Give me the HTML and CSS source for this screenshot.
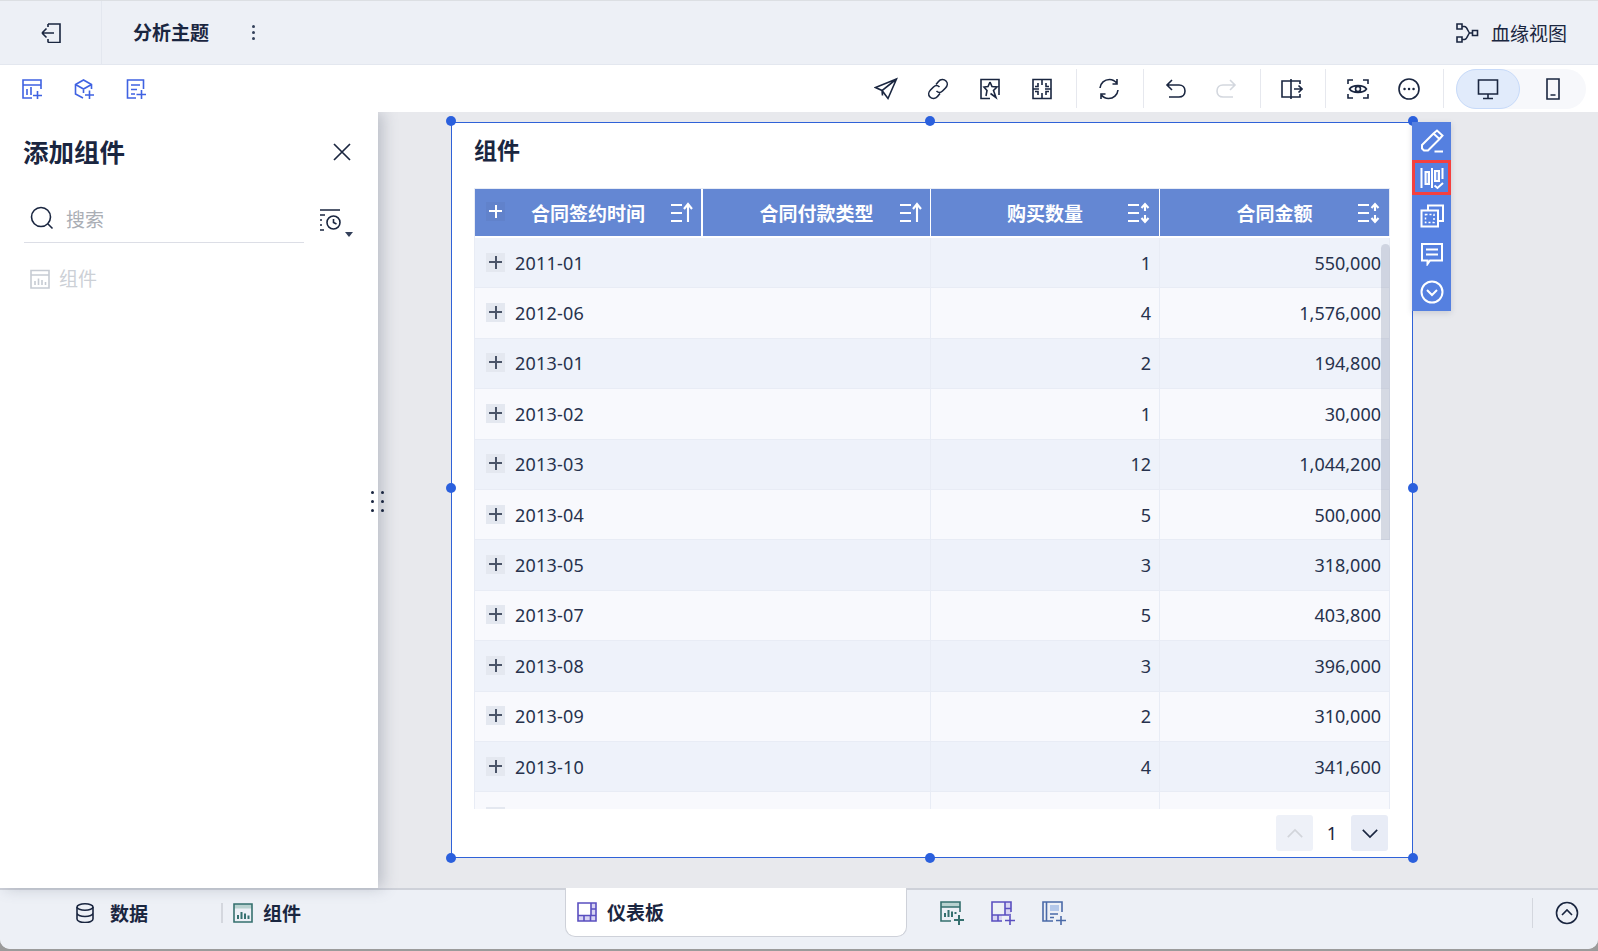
FILE: index.html
```html
<!DOCTYPE html>
<html lang="zh-CN">
<head>
<meta charset="utf-8">
<title>分析主题</title>
<link rel="stylesheet" href="styles.css">
</head>
<body>
<div class="app">
  <header class="topbar">
    <div class="back-cell">
      <svg class="ic20" viewBox="0 0 20 20"><path d="M7 1H19V19.500H7M7 1V4M7 19.500V16M1 10H13M1 10L5.500 5.500M1 10L5.500 14.500"/></svg>
    </div>
    <div class="title">分析主题</div>
    <div class="kebab"><i></i><i></i><i></i></div>
    <div class="lineage">
      <svg class="ic24" viewBox="0 0 24 24"><path d="M2 3H7V8H2ZM2 16H7V21H2ZM17.500 9.500H22.500V14.500H17.500ZM7 5.500H9.500C12.500 5.500 13 12 15 12H17.500M15 12C13 12 12.500 18.500 9.500 18.500H7"/></svg>
      <span>血缘视图</span>
    </div>
  </header>

  <nav class="toolbar">
    <div class="add-group">
      <svg class="ic20 blue" viewBox="0 0 20 20"><path d="M10 19H1V1H19V10M1 6H19M5 16V10M9 16V8M11 16.500H20M15.500 12V20.500"/></svg>
      <svg class="ic20 blue" viewBox="0 0 20 20"><path d="M9 19L1.500 15V5.500L9.500 1L17.500 5.500V10M1.500 5.500L9.500 10L17.500 5.500M9.500 10V14M11 16H20M15.500 11.500V20.500"/></svg>
      <svg class="ic20 blue" viewBox="0 0 20 20"><path d="M10 19H1.500V1H17.500V10M5 6H14M5 10.500H11M5 15H9M10.500 15.500H20M15.500 11V20"/></svg>
    </div>
    <div class="tools">
      <div class="tool-group">
        <svg class="ic24" viewBox="0 0 24 24"><path d="M22.500 2L1.500 10.500L8 13.500L14 21.500ZM22.500 2L8 13.500L8.500 18.500"/></svg>
        <svg class="ic24" viewBox="0 0 24 24"><path d="M10 7.500L12.500 4.500C14.500 2 18 2 20 4C22 6 21.500 9 19.500 11L16.500 14C14.500 16 12 15.500 10.500 14M14 16.500L11.500 19.500C9.500 22 6 22 4 20C2 18 2.500 15 4.500 13L7.500 10C9.500 8 12 8.500 13.500 10"/></svg>
        <svg class="ic24" viewBox="0 0 24 24"><path d="M12 21.500H3V2.500H21V18M12 5L14 9.500L19 10L15.500 13.500L18 20.500L12.500 16.500M12 5L10 9.500L6 10L9 13.500L8 19"/></svg>
        <svg class="ic24" viewBox="0 0 24 24"><path d="M3 2.500H21V21.500H3ZM3 12H9M15 12H21M12 2.500V8M12 16V21.500M8 6V9.500H5M16 6V9.500H19M8 18V14.500H5M16 18V14.500H19"/></svg>
      </div>
      <div class="tool-group">
        <svg class="ic24" viewBox="0 0 24 24"><path d="M3 11C3.500 6 7.500 2.500 12.500 2.500C16 2.500 18.500 4.500 20 6.500M20 2V7H15.500M21 13C20.500 18 16.500 21.500 11.500 21.500C8 21.500 5.500 19.500 4 17.500M4 22V17H8.500"/></svg>
      </div>
      <div class="tool-group wide">
        <svg class="ic24" viewBox="0 0 24 24"><path d="M8 3L3 8L8 13M3 8H15C18.500 8 21 10.500 21 14C21 17.500 18.500 20 15 20H5"/></svg>
        <svg class="ic24 muted" viewBox="0 0 24 24"><path d="M16 3L21 8L16 13M21 8H9C5.500 8 3 10.500 3 14C3 17.500 5.500 20 9 20H19"/></svg>
      </div>
      <div class="tool-group tight">
        <svg class="ic24" viewBox="0 0 24 24"><path d="M12 4H3V20H12V2V22M12 4H21V7M12 20H21V17M15 12H23M19.500 8.500L23 12L19.500 15.500"/></svg>
      </div>
      <div class="tool-group">
        <svg class="ic24" viewBox="0 0 24 24"><path d="M2 7V3H7M17 3H22V7M22 17V21H17M7 21H2V17M3.500 12C6.500 7.500 17.500 7.500 20.500 12C17.500 16.500 6.500 16.500 3.500 12ZM12 9.500A2.500 2.500 0 1 0 12 14.500A2.500 2.500 0 1 0 12 9.500Z"/></svg>
        <svg class="ic24" viewBox="0 0 24 24"><circle cx="12" cy="12" r="10"/><path class="dots" d="M7.500 12H7.600M12 12H12.100M16.500 12H16.600"/></svg>
      </div>
      <div class="device">
        <div class="device-on">
          <svg class="ic24" viewBox="0 0 24 24"><path d="M2.500 3H21.500V17H2.500ZM12 17V21.500M7 21.500H17"/></svg>
        </div>
        <div class="device-off">
          <svg class="ic24" viewBox="0 0 24 24"><path d="M6 2H18V22H6ZM9.500 18H14.500"/></svg>
        </div>
      </div>
    </div>
  </nav>

  <main class="workspace">
    <aside class="sidebar">
      <div class="side-head">
        <h2>添加组件</h2>
        <svg class="close" viewBox="0 0 20 20"><path d="M2 2L18 18M18 2L2 18"/></svg>
      </div>
      <div class="search-row">
        <div class="search">
          <svg class="ic24" viewBox="0 0 24 24"><circle cx="11" cy="11" r="9.500"/><path d="M18 18L22.500 22.500"/></svg>
          <span>搜索</span>
        </div>
        <div class="history">
          <svg class="ic24" viewBox="0 0 24 24"><path d="M1 2H21M1 7H6M1 12H3M1 17H3M1 22H5M14.500 8A6.500 6.500 0 1 0 14.500 21A6.500 6.500 0 1 0 14.500 8ZM14.500 11V14.500L17.500 16"/></svg>
          <i class="caret"></i>
        </div>
      </div>
      <div class="side-item">
        <svg class="ic20 faint" viewBox="0 0 20 20"><path d="M1 1.500H19V19H1ZM1 6H19M5 16V12M8.500 16V9.500M12 16V11M15.500 16V13"/></svg>
        <span>组件</span>
      </div>
      <div class="grip"><i></i><i></i><i></i><i></i><i></i><i></i></div>
    </aside>

    <section class="canvas">
      <article class="widget">
        <h3>组件</h3>
        <div class="table">
          <div class="thead">
            <div class="th up">
              <span class="plus on-head"></span>
              <span>合同签约时间</span>
              <svg class="sort" viewBox="0 0 24 22"><path d="M1 3H12M1 11H12M1 19H12"/><path d="M18 20V3M14 7L18 2L22 7"/></svg>
            </div>
            <div class="th up">
              <span>合同付款类型</span>
              <svg class="sort" viewBox="0 0 24 22"><path d="M1 3H12M1 11H12M1 19H12"/><path d="M18 20V3M14 7L18 2L22 7"/></svg>
            </div>
            <div class="th">
              <span>购买数量</span>
              <svg class="sort" viewBox="0 0 24 22"><path d="M1 3H12M1 11H12M1 19H12"/><path d="M18 9V3M14.500 6L18 2L21.500 6M18 13V19M14.500 16L18 20L21.500 16"/></svg>
            </div>
            <div class="th">
              <span>合同金额</span>
              <svg class="sort" viewBox="0 0 24 22"><path d="M1 3H12M1 11H12M1 19H12"/><path d="M18 9V3M14.500 6L18 2L21.500 6M18 13V19M14.500 16L18 20L21.500 16"/></svg>
            </div>
          </div>
          <div class="tr"><div class="td first"><span class="plus"></span><span class="date">2011-01</span></div><div class="td">1</div><div class="td">550,000</div></div>
          <div class="tr"><div class="td first"><span class="plus"></span><span class="date">2012-06</span></div><div class="td">4</div><div class="td">1,576,000</div></div>
          <div class="tr"><div class="td first"><span class="plus"></span><span class="date">2013-01</span></div><div class="td">2</div><div class="td">194,800</div></div>
          <div class="tr"><div class="td first"><span class="plus"></span><span class="date">2013-02</span></div><div class="td">1</div><div class="td">30,000</div></div>
          <div class="tr"><div class="td first"><span class="plus"></span><span class="date">2013-03</span></div><div class="td">12</div><div class="td">1,044,200</div></div>
          <div class="tr"><div class="td first"><span class="plus"></span><span class="date">2013-04</span></div><div class="td">5</div><div class="td">500,000</div></div>
          <div class="tr"><div class="td first"><span class="plus"></span><span class="date">2013-05</span></div><div class="td">3</div><div class="td">318,000</div></div>
          <div class="tr"><div class="td first"><span class="plus"></span><span class="date">2013-07</span></div><div class="td">5</div><div class="td">403,800</div></div>
          <div class="tr"><div class="td first"><span class="plus"></span><span class="date">2013-08</span></div><div class="td">3</div><div class="td">396,000</div></div>
          <div class="tr"><div class="td first"><span class="plus"></span><span class="date">2013-09</span></div><div class="td">2</div><div class="td">310,000</div></div>
          <div class="tr"><div class="td first"><span class="plus"></span><span class="date">2013-10</span></div><div class="td">4</div><div class="td">341,600</div></div>
          <div class="tr"><div class="td first"><span class="plus"></span></div><div class="td"></div><div class="td"></div></div>
          <div class="scrollbar"></div>
        </div>
        <div class="pager">
          <div class="page-btn off"><svg viewBox="0 0 20 12"><path d="M2 10L10 2L18 10"/></svg></div>
          <span class="page-num">1</span>
          <div class="page-btn"><svg viewBox="0 0 20 12"><path d="M2 2L10 10L18 2"/></svg></div>
        </div>

        <i class="handle h-tl"></i><i class="handle h-tc"></i><i class="handle h-tr"></i>
        <i class="handle h-ml"></i><i class="handle h-mr"></i>
        <i class="handle h-bl"></i><i class="handle h-bc"></i><i class="handle h-br"></i>

        <div class="float-bar">
          <div class="float-btn"><svg viewBox="0 0 24 24"><path d="M2 16L13.500 4.500L17 1.500L22.500 6.500L19.500 10L8 21.500H4L2 19.500ZM13.500 4.500L19.500 10M14.500 22.500H23"/></svg></div>
          <div class="float-btn active"><svg viewBox="0 0 24 24"><path d="M1.500 2V22M22.500 2V13M12 2V22"/><path class="tint" d="M5.500 6H9V18H5.500ZM15 5H19V15H15Z"/><path d="M14.500 19.500L17.500 22L23 17"/></svg></div>
          <div class="float-btn"><svg viewBox="0 0 24 24"><path d="M8 6.500V1.500H23V17H18M1.500 6.500H18V22.500H1.500Z"/><path class="dash" d="M5.500 10.500H14V18.500H5.500Z"/></svg></div>
          <div class="float-btn"><svg viewBox="0 0 24 24"><path d="M2 2H22V18.500H10L7.500 22V18.500H2ZM6 7.500H18M6 12.500H18"/></svg></div>
          <div class="float-btn"><svg viewBox="0 0 24 24"><circle cx="12" cy="12" r="10.500"/><path d="M7 10L12 15L17 10"/></svg></div>
        </div>
      </article>
    </section>
  </main>

  <footer class="bottombar">
    <div class="bt-data">
      <svg class="ic20" viewBox="0 0 20 20"><ellipse cx="10" cy="4" rx="8" ry="3.200"/><path d="M2 4V16C2 18 5.500 19.500 10 19.500C14.500 19.500 18 18 18 16V4M2 10C2 12 5.500 13.500 10 13.500C14.500 13.500 18 12 18 10"/></svg>
      <span>数据</span>
    </div>
    <div class="bt-sep"></div>
    <div class="bt-comp">
      <svg class="ic20 teal" viewBox="0 0 20 20"><path class="fill-teal" d="M1 1H19V5.500H1Z"/><path d="M1 1H19V19H1Z"/><path class="bars" d="M5 16V12M8.500 16V9M12 16V10.500M15.500 16V12.500"/></svg>
      <span>组件</span>
    </div>
    <div class="bt-tab">
      <svg class="ic20 violet" viewBox="0 0 20 20"><path class="fill-violet" d="M14 1H19V19H1V13.500H14Z"/><path d="M1 1H19V19H1ZM14 1V13.500M1 13.500H19M14 7H19M7 13.500V19M13.500 13.500V19"/></svg>
      <span>仪表板</span>
    </div>
    <div class="bt-adds">
      <svg class="ic24 teal" viewBox="0 0 24 24"><path class="fill-teal" d="M1 1H20V6H1Z"/><path d="M11 20H1V1H20V11M1 6H20"/><path class="bars" d="M5 16V12M8.500 16V9M12 16V10.500M15.500 13V11M14 19H24M19 14V24"/></svg>
      <svg class="ic24 violet" viewBox="0 0 24 24"><path class="fill-violet" d="M14 1H20V14H1V20H11V14H14Z"/><path d="M11 20H1V1H20V11M1 14H20M14 1V14M14 7.500H20M7 14V20M14 19.500H24M19 15V24"/></svg>
      <svg class="ic24 slate" viewBox="0 0 24 24"><path class="fill-slate" d="M8 4H17V10H8Z"/><path d="M11 20H1V1H20V11M4.500 1V20M8 13H16M8 16.500H12M14 19.500H24M19 15V24"/></svg>
    </div>
    <div class="bt-end">
      <svg class="ic24" viewBox="0 0 24 24"><circle cx="12" cy="12" r="10.500"/><path d="M7 14L12 9L17 14"/></svg>
    </div>
  </footer>
</div>
</body>
</html>
```

FILE: styles.css
```css
* { box-sizing: border-box; }
html, body { margin: 0; height: 951px; overflow: hidden; }
body {
  background: #9b9b9b;
  font-family: "Noto Sans", "Noto Sans CJK SC", sans-serif;
  color: #1a2640;
}
svg { display: block; fill: none; stroke: currentColor; stroke-width: 1.6; flex: none; }
.ic20 { width: 20px; height: 20px; }
.ic24 { width: 24px; height: 24px; }
.blue { color: #3f62e2; }
.muted { color: #d3d7de; }
.faint { color: #c6cbd3; }
.teal { color: #35706f; }
.violet { color: #5a4fc0; }
.slate { color: #4a6aa8; }
.fill-teal { fill: #b9d2d0; stroke: none; }
.fill-violet { fill: #d8d4f3; stroke: none; }
.fill-slate { fill: #b4c8ea; stroke: none; }

.app {
  height: 949px;
  display: flex;
  flex-direction: column;
  background: #e8e9ed;
  border-radius: 0 0 10px 10px;
  overflow: hidden;
}

/* top bar */
.topbar {
  height: 65px;
  flex: none;
  display: flex;
  align-items: center;
  background: #edf0f6;
  border-top: 1px solid #dcdfe3;
  border-bottom: 1px solid #e3e7ef;
}
.back-cell {
  width: 102px;
  height: 100%;
  display: flex;
  align-items: center;
  padding-left: 41px;
  border-right: 1px solid #e3e7ef;
}
.title { margin-left: 31px; font-size: 19px; font-weight: 700; line-height: 26px; }
.kebab { margin-left: 43px; display: flex; flex-direction: column; gap: 3px; }
.kebab i { width: 3px; height: 3px; border-radius: 50%; background: #33405a; }
.lineage { margin-left: auto; margin-right: 31px; display: flex; align-items: center; gap: 12px; font-size: 19px; }

/* toolbar */
.toolbar {
  height: 47px;
  flex: none;
  display: flex;
  align-items: center;
  background: #fff;
  padding-right: 12px;
  position: relative;
  z-index: 2;
}
.add-group { display: flex; gap: 32px; padding-left: 22px; }
.tools { margin-left: auto; display: flex; align-items: center; }
.tool-group {
  display: flex;
  gap: 27px;
  height: 39px;
  align-items: center;
  padding: 0 22px 0 20px;
  border-right: 1px solid #e6e8ee;
}
.tool-group:first-child { gap: 28px; }
.tool-group.wide { gap: 26px; }
.tool-group.tight { padding-left: 18px; }
.dots { stroke-width: 2.4; stroke-linecap: round; }
.device {
  margin-left: 12px;
  width: 130px;
  height: 40px;
  display: flex;
  align-items: center;
  border-radius: 20px;
  background: #f7f8fb;
}
.device-on {
  width: 64px;
  height: 40px;
  display: flex;
  align-items: center;
  justify-content: center;
  background: #e1ebfb;
  border: 1px solid #c7daf9;
  border-radius: 20px;
}
.device-off { flex: 1; display: flex; justify-content: center; }

/* workspace */
.workspace { flex: 1; min-height: 0; display: flex; }
.sidebar {
  width: 378px;
  flex: none;
  background: #fff;
  padding: 0 24px;
  position: relative;
  z-index: 1;
  box-shadow: 5px 0 14px rgba(95, 105, 125, .32);
}
.side-head { height: 82px; padding-bottom: 3px; display: flex; align-items: center; justify-content: space-between; }
.side-head h2 { margin: 0 0 0 -1px; font-size: 25.500px; line-height: 34px; font-weight: 700; }
.close { width: 20px; height: 20px; margin-right: 2px; stroke-width: 1.7; }
.search-row { display: flex; align-items: center; justify-content: space-between; }
.search {
  width: 280px;
  height: 49px;
  display: flex;
  align-items: center;
  gap: 12px;
  padding-left: 6px;
  border-bottom: 1px solid #dcdee6;
  font-size: 19px;
  color: #aaaeb5;
}
.search span { position: relative; top: 1px; }
.search svg { color: #1a2640; }
.history { position: relative; margin-right: 11px; margin-top: 3px; }
.caret {
  position: absolute;
  left: 26px;
  top: 24px;
  border: 4px solid transparent;
  border-top: 5px solid #33405a;
  border-bottom: 0;
}
.side-item { margin-top: 23px; padding-left: 6px; display: flex; align-items: center; gap: 9px; font-size: 19px; line-height: 26px; color: #ccd0d6; }
.grip {
  position: absolute;
  left: 371px;
  top: 379px;
  display: grid;
  grid-template-columns: 3px 3px;
  column-gap: 7px;
  row-gap: 6px;
}
.grip i { width: 3px; height: 3px; border-radius: 50%; background: #1a2640; }

/* canvas */
.canvas { flex: 1; min-width: 0; padding: 10px 0 0 73px; }
.widget {
  position: relative;
  width: 962px;
  height: 736px;
  background: #fff;
  border: 1px solid #2f62d8;
  padding: 0 22px;
  display: flex;
  flex-direction: column;
}
.widget h3 { margin: 0; height: 65px; flex: none; padding-top: 12px; font-size: 23px; line-height: 30px; font-weight: 700; }
.table {
  position: relative;
  height: 621px;
  width: 916px;
  flex: none;
  overflow: hidden;
  border-left: 1px solid #e8ecf5;
  border-top: 1px solid #e8ecf5;
}
.thead, .tr {
  display: grid;
  grid-template-columns: 228px 228px 229px 230px;
}
.thead { height: 49px; border-bottom: 2px solid #fff; }
.th {
  position: relative;
  background: #6487d3;
  border-right: 1px solid #fff;
  color: #fff;
  font-size: 19px;
  font-weight: 700;
  display: flex;
  align-items: center;
  justify-content: center;
}
.th:first-child { border-right-width: 2px; }
.th:last-child { border-right-color: #e8ecf5; }
.sort {
  position: absolute;
  right: 8px;
  top: 13px;
  width: 24px;
  height: 22px;
  stroke-width: 2.100;
}
.th.up .sort { right: 7px; }
.tr {
  height: 50.400px;
  background: #eef2fa;
  border-bottom: 1px solid #e8ecf5;
  font-size: 18px;
  line-height: 24px;
  color: #27324d;
}
.tr:nth-child(odd) { background: #f8f9fd; }
.td {
  display: flex;
  align-items: center;
  justify-content: flex-end;
  padding-right: 8px;
  border-right: 1px solid #e8ecf5;
}
.td.first { grid-column: 1 / span 2; justify-content: flex-start; padding-left: 11px; gap: 10px; }
.date { letter-spacing: .2px; }
.plus {
  position: relative;
  width: 19px;
  height: 19px;
  flex: none;
  margin-top: -1px;
  background: #e4e8f0;
}
.plus::before, .plus::after {
  content: "";
  position: absolute;
  background: #4a5468;
}
.plus::before { left: 3px; right: 3px; top: 8px; height: 2px; }
.plus::after { top: 3px; bottom: 3px; left: 9px; width: 1.500px; }
.plus.on-head { position: absolute; left: 11px; top: 14px; background: #6182cb; }
.plus.on-head::before, .plus.on-head::after { background: #fff; }
.scrollbar {
  position: absolute;
  right: 0;
  top: 55px;
  width: 9px;
  height: 296px;
  border-radius: 5px 5px 0 0;
  background: rgba(150, 158, 178, .35);
}
.pager { flex: 1; display: flex; align-items: flex-start; justify-content: flex-end; padding: 5px 2px 0 0; }
.page-btn {
  width: 37px;
  height: 36px;
  display: flex;
  align-items: center;
  justify-content: center;
  background: #e8ecf6;
  border-radius: 3px;
  margin-top: 1px;
}
.page-btn.off { background: #eef1f8; color: #d2d5db; }
.page-btn svg { width: 18px; height: 11px; stroke-width: 1.8; }
.page-num { width: 38px; text-align: center; font-size: 18px; line-height: 37px; padding-top: 1px; }

.handle {
  position: absolute;
  width: 10px;
  height: 10px;
  border-radius: 50%;
  background: #2b60dd;
}
.h-tl { left: -6px; top: -7px; }
.h-tc { left: 473px; top: -7px; }
.h-tr { right: -6px; top: -7px; }
.h-ml { left: -6px; top: 360px; }
.h-mr { right: -6px; top: 360px; }
.h-bl { left: -6px; bottom: -6px; }
.h-bc { left: 473px; bottom: -6px; }
.h-br { right: -6px; bottom: -6px; }

.float-bar {
  position: absolute;
  left: 100%;
  top: -1px;
  width: 39px;
  height: 189px;
  background: #5580e0;
  color: #fff;
  display: flex;
  flex-direction: column;
  box-shadow: 0 2px 6px rgba(80, 90, 110, .2);
}
.float-btn { height: 38px; flex: none; display: flex; align-items: center; justify-content: center; }
.float-btn svg { width: 24px; height: 24px; stroke-width: 2; }
.float-btn.active { height: 35px; margin-bottom: 2px; outline: 3px solid #f4403f; outline-offset: -3px; }
.tint { fill: rgba(255, 255, 255, .3); }
.dash { stroke-dasharray: 2 2; stroke-width: 1.5; }

/* bottom bar */
.bottombar {
  height: 61px;
  flex: none;
  display: flex;
  align-items: center;
  padding-bottom: 13px;
  background: #edf0f6;
  border-top: 2px solid #ced1d9;
  font-size: 19px;
  font-weight: 700;
}
.bt-data { margin-left: 75px; width: 146px; display: flex; align-items: center; gap: 15px; }
.bt-sep { width: 2px; height: 20px; background: #d4d7de; }
.bt-comp { margin-left: 10px; display: flex; align-items: center; gap: 10px; }
.bars { stroke-width: 2; }
.bt-tab {
  margin-left: 264px;
  width: 342px;
  height: 49px;
  align-self: flex-start;
  margin-top: -2px;
  display: flex;
  align-items: center;
  gap: 10px;
  padding-left: 11px;
  background: #fff;
  border: 1px solid #ced1d9;
  border-top: 0;
  border-radius: 0 0 10px 10px;
}
.bt-adds { margin-left: 33px; display: flex; gap: 27px; }
.bt-end { margin-left: auto; height: 30px; display: flex; align-items: center; padding-left: 22px; padding-right: 19px; border-left: 1px solid #d4d7de; }
```
